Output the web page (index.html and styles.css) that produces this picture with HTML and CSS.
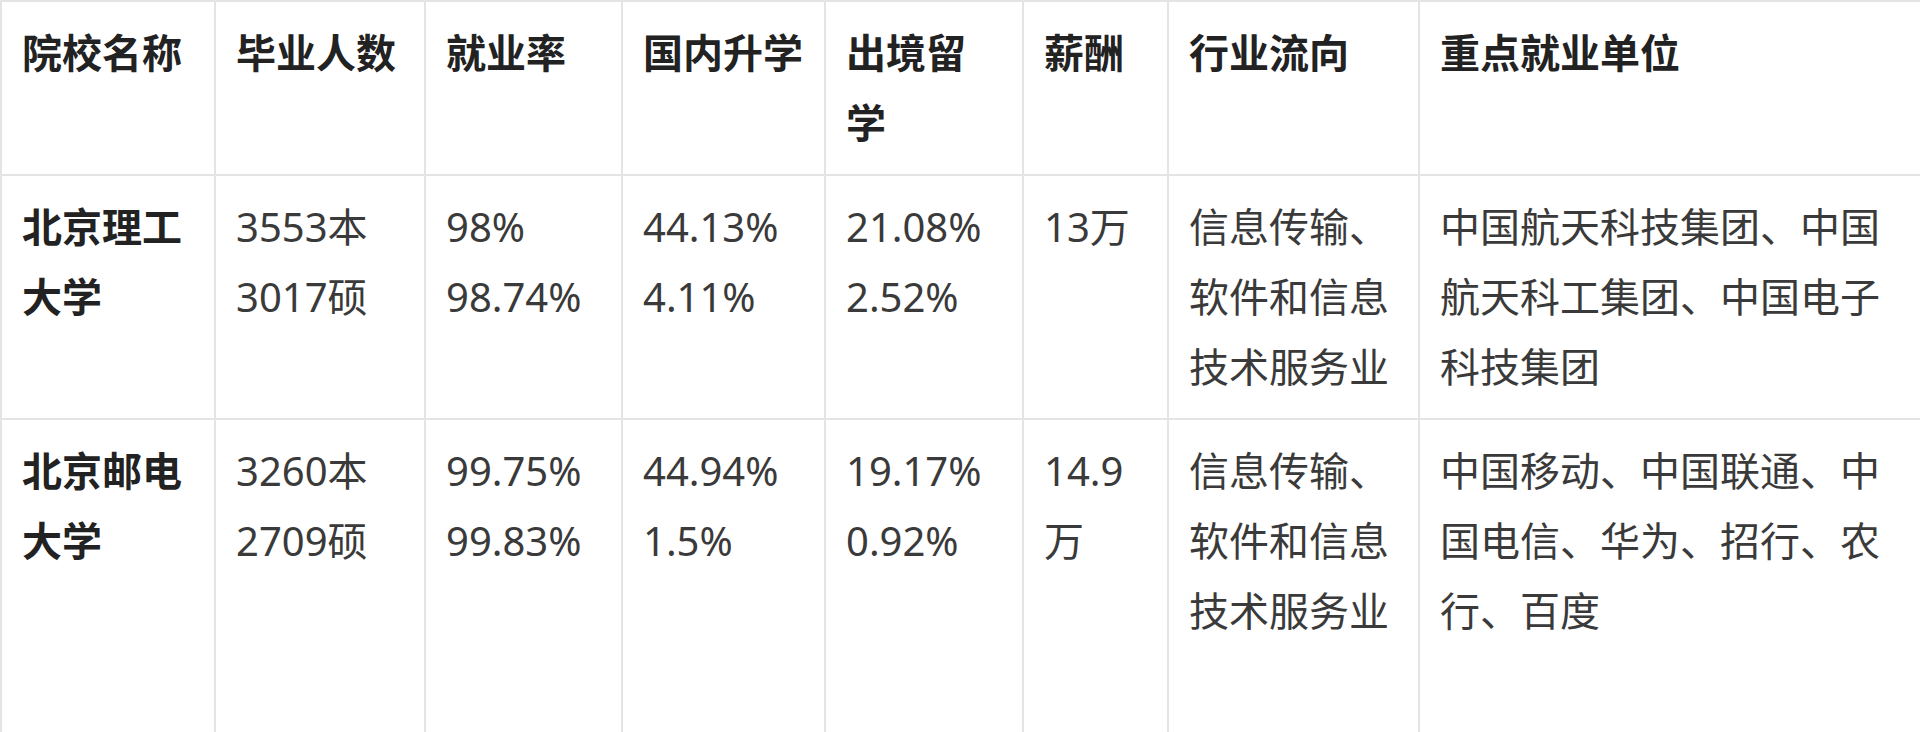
FILE: index.html
```html
<!DOCTYPE html>
<html lang="zh-CN">
<head>
<meta charset="utf-8">
<title>院校就业数据</title>
<link rel="stylesheet" href="styles.css">
</head>
<body>
<table class="data">
  <colgroup>
    <col class="c1"><col class="c2"><col class="c3"><col class="c4"><col class="c5"><col class="c6"><col class="c7"><col class="c8">
  </colgroup>
  <thead>
    <tr class="head">
      <th>院校名称</th>
      <th>毕业人数</th>
      <th>就业率</th>
      <th>国内升学</th>
      <th>出境留学</th>
      <th>薪酬</th>
      <th>行业流向</th>
      <th>重点就业单位</th>
    </tr>
  </thead>
  <tbody>
    <tr class="row">
      <td class="name">北京理工大学</td>
      <td>3553本<br>3017硕</td>
      <td>98%<br>98.74%</td>
      <td>44.13%<br>4.11%</td>
      <td>21.08%<br>2.52%</td>
      <td>13万</td>
      <td>信息传输、软件和信息技术服务业</td>
      <td>中国航天科技集团、中国航天科工集团、中国电子科技集团</td>
    </tr>
    <tr class="row last">
      <td class="name">北京邮电大学</td>
      <td>3260本<br>2709硕</td>
      <td>99.75%<br>99.83%</td>
      <td>44.94%<br>1.5%</td>
      <td>19.17%<br>0.92%</td>
      <td>14.9万</td>
      <td>信息传输、软件和信息技术服务业</td>
      <td>中国移动、中国联通、中国电信、华为、招行、农行、百度</td>
    </tr>
  </tbody>
</table>
</body>
</html>
```

FILE: styles.css
```css
html, body {
  margin: 0;
  padding: 0;
  background: #ffffff;
  overflow: hidden;
}

.data {
  width: 1920px;
  table-layout: fixed;
  border-collapse: collapse;
  font-family: "Noto Sans", "Noto Sans CJK SC", sans-serif;
  font-size: 40px;
  line-height: 70px;
  color: #3a3a3a;
}

.c1 { width: 214px; }
.c2 { width: 210px; }
.c3 { width: 197px; }
.c4 { width: 203px; }
.c5 { width: 198px; }
.c6 { width: 145px; }
.c7 { width: 251px; }
.c8 { width: 502px; }

.data th,
.data td {
  border: 2px solid #e4e4e4;
  padding: 16px 20px;
  vertical-align: top;
  text-align: left;
  word-break: break-all;
}

.data th {
  font-weight: 700;
  color: #222222;
}

.data td.name {
  font-weight: 700;
  color: #222222;
}

.row.last td {
  height: 330px;
}
```
